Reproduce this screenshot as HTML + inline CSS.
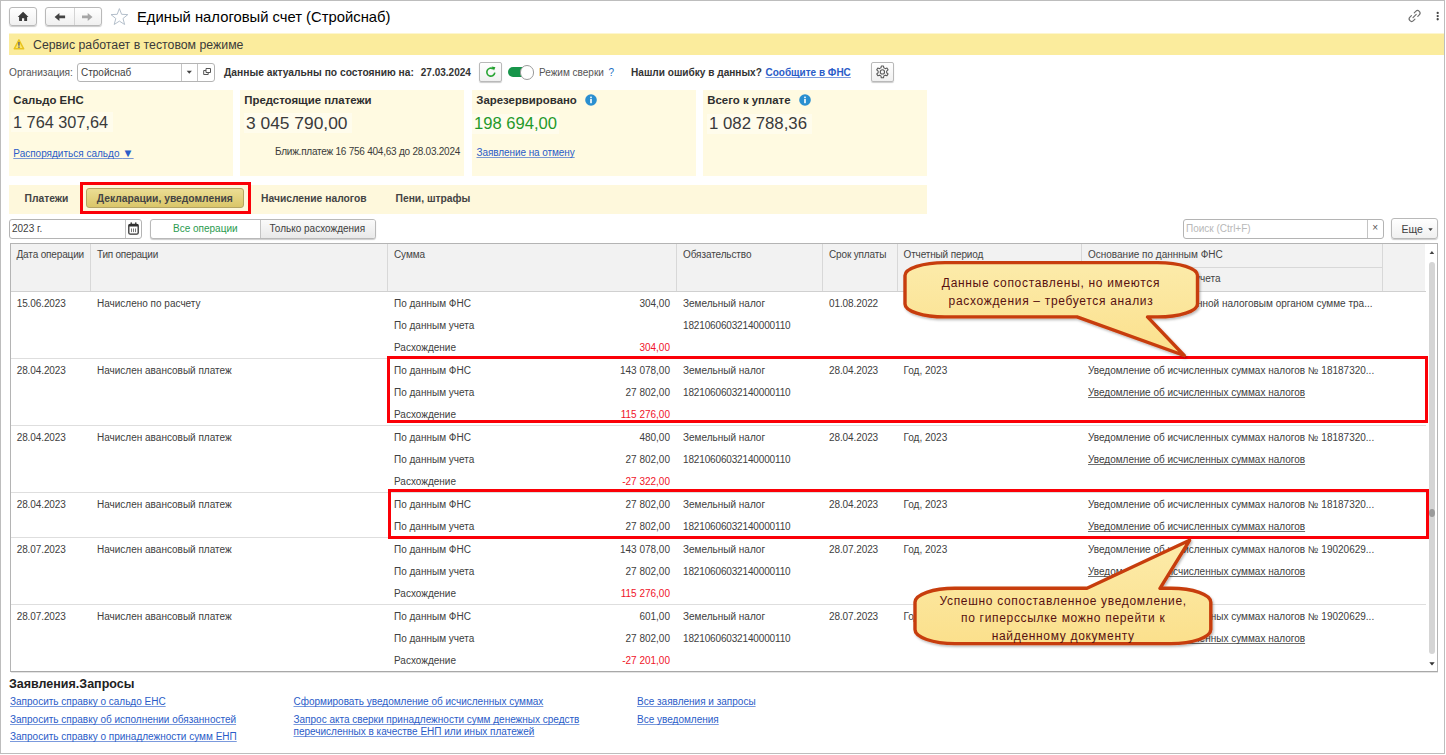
<!DOCTYPE html>
<html lang="ru"><head><meta charset="utf-8"><title>Единый налоговый счет</title>
<style>
*{box-sizing:border-box}
html,body{margin:0;padding:0}
body{width:1446px;height:755px;position:relative;overflow:hidden;background:#fff;font-family:"Liberation Sans",sans-serif;font-size:10px;color:#333;line-height:1}
.a{position:absolute;white-space:nowrap}
.b{font-weight:bold}
.t{position:absolute;white-space:nowrap;height:14px;line-height:14px;font-size:10px;color:#404040}
.r{text-align:right}
.red{color:#f0142a}
.lnk{color:#2a5cc8;text-decoration:underline;text-decoration-skip-ink:none;text-decoration-thickness:1px;text-decoration-color:rgba(42,92,200,.62)}
.u{text-decoration:underline;text-decoration-skip-ink:none;text-decoration-thickness:1px;text-decoration-color:rgba(50,50,50,.7)}
.btn{position:absolute;border:1px solid #b9b9b9;border-radius:3px;background:linear-gradient(#ffffff,#f0f0f0);box-shadow:0 1px 1px rgba(0,0,0,.2)}
.inp{position:absolute;border:1px solid #b4b4b4;border-radius:3px;background:#fff}
.card{position:absolute;top:90px;height:86px;width:223.5px;background:#fffae1}
.hl{position:absolute;height:1px;background:#dedede}
.vl{position:absolute;width:1px;background:#d8d8d8}
</style></head>
<body>
<div class="a" style="left:0;top:0;width:1445px;height:754px;border:1px solid #bdbdbd"></div>
<div class="btn" style="left:9px;top:7px;width:28px;height:19px"></div>
<div class="btn" style="left:45px;top:7px;width:57px;height:19px"></div>
<div class="vl" style="left:74px;top:8px;height:17px;background:#d4d4d4"></div>
<svg class="a" style="left:0;top:0" width="140" height="30" viewBox="0 0 140 30"><path d="M23.1 11.7 L28.5 17.1 H27.1 V21.1 H24.2 V18.3 H22 V21.1 H19.1 V17.1 H17.7 Z" fill="#3a3a3a"/><path d="M54.6 16.95 L59.4 13 V15.6 H65.1 V18.3 H59.4 V20.9 Z" fill="#444"/><path d="M92.5 16.95 L87.7 13 V15.6 H82 V18.3 H87.7 V20.9 Z" fill="#a6a6a6"/><path d="M119.4 8.6 L121.6 14.3 L127.8 14.6 L123 18.5 L124.6 24.5 L119.4 21.1 L114.2 24.5 L115.8 18.5 L111 14.6 L117.2 14.3 Z" stroke="#b4bfcb" stroke-width="1" fill="#fff" stroke-linejoin="miter"/></svg>
<div class="a" style="left:137px;top:7.5px;font-size:14.8px;line-height:18px;color:#000">Единый налоговый счет (Стройснаб)</div>
<svg class="a" style="left:1400px;top:4px" width="44" height="24" viewBox="1400 4 44 24"><g transform="translate(1414.6 16) rotate(-45)" fill="none" stroke="#6e6e6e" stroke-width="1.15" stroke-linecap="round"><path d="M2 -2.5 H4.1 A2.5 2.5 0 0 1 4.1 2.5 H2"/><path d="M-2 -2.5 H-4.1 A2.5 2.5 0 0 0 -4.1 2.5 H-2"/><path d="M-2.3 0 H2.3"/></g><circle cx="1437.7" cy="12.95" r="1.15" fill="#444"/><circle cx="1437.7" cy="16.1" r="1.15" fill="#444"/><circle cx="1437.7" cy="19.25" r="1.15" fill="#444"/></svg>
<div class="a" style="left:9px;top:33px;width:1435px;height:1px;background:#fdf6cf"></div><div class="a" style="left:9px;top:34px;width:1435px;height:21px;background:#fbec9d"></div>
<svg class="a" style="left:12px;top:37px" width="14" height="14" viewBox="12 37 14 14"><path d="M18.95 39.8 L23.7 48.8 H14.2 Z" fill="#fbe66a" stroke="#e8c21e" stroke-width="1.4" stroke-linejoin="round"/><rect x="18.3" y="42" width="1.3" height="3.7" fill="#4e5270"/><rect x="18.3" y="46.5" width="1.3" height="1.3" fill="#4e5270"/></svg>
<div class="a" style="left:33px;top:38px;font-size:12.3px;line-height:15px;color:#3a3a3a">Сервис работает в тестовом режиме</div>
<div class="t" style="left:9px;top:66px;color:#555;font-size:10.15px">Организация:</div>
<div class="inp" style="left:77px;top:63px;width:138px;height:19px"></div>
<div class="vl" style="left:181px;top:64px;height:17px;background:#c4c4c4"></div><div class="vl" style="left:197px;top:64px;height:17px;background:#c4c4c4"></div>
<div class="t" style="left:81px;top:66px">Стройснаб</div>
<svg class="a" style="left:186px;top:70px" width="7" height="5" viewBox="0 0 7 5"><path d="M0.7 0.7 H5.9 L3.3 3.7 Z" fill="#444"/></svg>
<svg class="a" style="left:202px;top:67px" width="10" height="10" viewBox="0 0 10 10"><g fill="none" stroke="#555" stroke-width="1"><path d="M4 1.5 H8.5 V5.5 H4 Z"/><path d="M4 3.5 H1.7 V7.5 H6.2 V5.5"/></g></svg>
<div class="t b" style="left:224px;top:66px;font-size:10.25px;color:#333">Данные актуальны по состоянию на:</div>
<div class="t b" style="left:420.8px;top:66px;font-size:10px;color:#333">27.03.2024</div>
<div class="btn" style="left:479px;top:62px;width:23px;height:20px;border-radius:2px"></div>
<svg class="a" style="left:485px;top:66px" width="12" height="12" viewBox="0 0 12 12"><path d="M9.8 6.6 A4 4 0 1 1 8.2 2.9" fill="none" stroke="#2aa636" stroke-width="1.6"/><path d="M6.6 0.6 L10.4 1.2 L9 4.6 Z" fill="#1f9e2c"/></svg>
<div class="a" style="left:508px;top:67px;width:22px;height:10px;border-radius:5px;background:#17954a"></div>
<div class="a" style="left:519.5px;top:65px;width:14.5px;height:14.5px;border-radius:7px;background:#fff;border:1px solid #9a9a9a"></div>
<div class="t" style="left:539px;top:66px;color:#555">Режим сверки</div>
<div class="t" style="left:608.5px;top:66px;color:#1a6fc4">?</div>
<div class="t b" style="left:631px;top:66px;font-size:10.1px;color:#333">Нашли ошибку в данных?</div>
<div class="t b lnk" style="left:765.5px;top:66px;font-size:10px">Сообщите в ФНС</div>
<div class="btn" style="left:871px;top:62px;width:23px;height:20px;border-radius:2px"></div>
<svg class="a" style="left:872px;top:62.3px" width="22" height="20" viewBox="872 62 22 20"><g fill="none" stroke="#5a5a5a" stroke-width="1.1" stroke-linejoin="round"><path d="M881.00 67.83L881.31 66.00L883.49 66.00L883.80 67.83A4.3 4.3 0 0 1 885.22 68.65L886.96 68.00L888.06 69.90L886.62 71.08A4.3 4.3 0 0 1 886.62 72.72L888.06 73.90L886.96 75.80L885.22 75.15A4.3 4.3 0 0 1 883.80 75.97L883.49 77.80L881.31 77.80L881.00 75.97A4.3 4.3 0 0 1 879.58 75.15L877.84 75.80L876.74 73.90L878.18 72.72A4.3 4.3 0 0 1 878.18 71.08L876.74 69.90L877.84 68.00L879.58 68.65A4.3 4.3 0 0 1 881.00 67.83Z"/><circle cx="882.4" cy="71.9" r="2.15"/></g></svg>
<div class="card" style="left:9px;width:224px"></div>
<div class="a b" style="left:13.3px;top:93.4px;font-size:11.4px;line-height:14px;color:#2e2e2e">Сальдо ЕНС</div>
<div class="a" style="left:11px;top:112px;width:102px;height:20px;background:#fffcec"></div>
<div class="a" style="left:13px;top:112px;font-size:16.3px;line-height:20px;color:#3a3a3a">1 764 307,64</div>
<div class="card" style="left:240px;width:224px"></div>
<div class="a b" style="left:244.3px;top:93.4px;font-size:11.4px;line-height:14px;color:#2e2e2e">Предстоящие платежи</div>
<div class="a" style="left:244px;top:113px;width:108px;height:20px;background:#fffcec"></div>
<div class="a" style="left:246px;top:113.3px;font-size:17.4px;line-height:20px;color:#3a3a3a">3 045 790,00</div>
<div class="card" style="left:472px;width:224px"></div>
<div class="a b" style="left:476.3px;top:93.4px;font-size:11.4px;line-height:14px;color:#2e2e2e">Зарезервировано</div>
<div class="a" style="left:472px;top:114px;width:87px;height:20px;background:#fffcec"></div>
<div class="a" style="left:474px;top:114px;font-size:16.6px;line-height:20px;color:#1f9a2a">198 694,00</div>
<div class="card" style="left:703px;width:224px"></div>
<div class="a b" style="left:707.3px;top:93.4px;font-size:11.4px;line-height:14px;color:#2e2e2e">Всего к уплате</div>
<div class="a" style="left:707px;top:114px;width:105px;height:20px;background:#fffcec"></div>
<div class="a" style="left:709px;top:113.7px;font-size:16.8px;line-height:20px;color:#3a3a3a">1 082 788,36</div>
<div class="t lnk" style="left:13.3px;top:146px">Распорядиться сальдо <span style="font-size:11.5px">▼</span></div>
<div class="a" style="left:275px;top:145.4px;font-size:10px;letter-spacing:-0.235px;line-height:14px;color:#3a3a3a">Ближ.платеж 16 756 404,63 до 28.03.2024</div>
<div class="t lnk" style="left:476.5px;top:146px;letter-spacing:-0.08px">Заявление на отмену</div>
<svg class="a" style="left:585px;top:94px" width="12" height="12" viewBox="0 0 12 12"><circle cx="6" cy="6" r="5.8" fill="#2a8fd0"/><rect x="5.2" y="5" width="1.6" height="4.2" fill="#fff"/><rect x="5.2" y="2.6" width="1.6" height="1.6" fill="#fff"/></svg>
<svg class="a" style="left:799px;top:94px" width="12" height="12" viewBox="0 0 12 12"><circle cx="6" cy="6" r="5.8" fill="#2a8fd0"/><rect x="5.2" y="5" width="1.6" height="4.2" fill="#fff"/><rect x="5.2" y="2.6" width="1.6" height="1.6" fill="#fff"/></svg>
<div class="a" style="left:9px;top:185px;width:918px;height:29px;background:#fef8dc"></div>
<div class="a" style="left:86px;top:188px;width:158px;height:20px;border:1px solid #b5a462;border-radius:3px;background:linear-gradient(#ebdd94,#dac669)"></div>
<svg class="a" style="left:70px;top:175px" width="200" height="50" viewBox="70 175 200 50"><rect x="81.5" y="183.5" width="168" height="29" fill="none" stroke="#fb0007" stroke-width="3"/></svg>
<div class="t b" style="left:24.5px;top:192.4px;font-size:10.3px;color:#444">Платежи</div>
<div class="t b" style="left:96.7px;top:192.4px;font-size:10.3px;color:#444">Декларации, уведомления</div>
<div class="t b" style="left:261px;top:192.4px;font-size:10.3px;color:#444">Начисление налогов</div>
<div class="t b" style="left:395.5px;top:192.4px;font-size:10.3px;color:#444">Пени, штрафы</div>
<div class="inp" style="left:9px;top:219px;width:133px;height:20px"></div>
<div class="vl" style="left:125px;top:220px;height:18px;background:#c4c4c4"></div>
<div class="t" style="left:12px;top:222px">2023 г.</div>
<svg class="a" style="left:128px;top:222px" width="11" height="13" viewBox="0 0 11 13"><rect x="0.8" y="2.3" width="9.4" height="9.9" rx="1.5" fill="#fff" stroke="#333" stroke-width="1.3"/><rect x="0.8" y="2.3" width="9.4" height="2.2" fill="#333"/><rect x="2.6" y="0.4" width="1.3" height="2.6" fill="#333"/><rect x="7.1" y="0.4" width="1.3" height="2.6" fill="#333"/><rect x="3" y="6.5" width="1" height="3.6" fill="#777"/><rect x="5" y="6.5" width="1" height="3.6" fill="#777"/><rect x="7" y="6.5" width="1" height="3.6" fill="#777"/></svg>
<div class="btn" style="left:150px;top:219px;width:225.5px;height:20px;background:#fff"></div>
<div class="a" style="left:260px;top:220px;width:114.5px;height:18px;border-left:1px solid #c4c4c4;border-radius:0 2px 2px 0;background:linear-gradient(#fafafa,#e9e9e9)"></div>
<div class="t" style="left:173px;top:222px;color:#2a9b4f">Все операции</div>
<div class="t" style="left:269.5px;top:222px">Только расхождения</div>
<div class="inp" style="left:1183px;top:219px;width:201px;height:20px"></div>
<div class="vl" style="left:1367px;top:220px;height:18px;background:#c4c4c4"></div>
<div class="t" style="left:1186px;top:222px;color:#b8b8b8">Поиск (Ctrl+F)</div>
<div class="t" style="left:1372.3px;top:220.5px;color:#555;font-size:10px">×</div>
<div class="btn" style="left:1391px;top:218px;width:47px;height:21px"></div>
<div class="t" style="left:1401.5px;top:222px;font-size:10.5px">Еще</div>
<svg class="a" style="left:1428px;top:228px" width="6" height="4" viewBox="0 0 6 4"><path d="M0.3 0.3 H4.7 L2.5 2.9 Z" fill="#444"/></svg>
<div class="a" style="left:10px;top:243px;width:1428px;height:429px;border:1px solid #b4b4b4;border-bottom-color:#a8a8a8;background:#fff"></div>
<div class="a" style="left:11px;top:244px;width:1414px;height:47px;background:#f2f2f2"></div>
<div class="hl" style="left:11px;top:291px;width:1415px;background:#d0d0d0"></div>
<div class="vl" style="left:90px;top:244px;height:47px"></div>
<div class="vl" style="left:387px;top:244px;height:47px"></div>
<div class="vl" style="left:676px;top:244px;height:47px"></div>
<div class="vl" style="left:822px;top:244px;height:47px"></div>
<div class="vl" style="left:897px;top:244px;height:47px"></div>
<div class="vl" style="left:1081px;top:244px;height:47px"></div>
<div class="vl" style="left:1382px;top:244px;height:47px"></div>
<div class="hl" style="left:1081px;top:267px;width:301px;background:#d8d8d8"></div>
<div class="t" style="left:16.5px;top:248px;color:#444;letter-spacing:-0.15px">Дата операции</div>
<div class="t" style="left:97px;top:248px;color:#444;letter-spacing:-0.25px">Тип операции</div>
<div class="t" style="left:394px;top:248px;color:#444;letter-spacing:-0.1px">Сумма</div>
<div class="t" style="left:683px;top:248px;color:#444;letter-spacing:-0.1px">Обязательство</div>
<div class="t" style="left:829px;top:248px;color:#444;letter-spacing:-0.15px">Срок уплаты</div>
<div class="t" style="left:903.5px;top:248px;color:#444;letter-spacing:-0.14px">Отчетный период</div>
<div class="t" style="left:1088px;top:248px;color:#444;letter-spacing:0px">Основание по даннным ФНС</div>
<div class="t" style="left:1088px;top:272px;color:#444">Основание по данным учета</div>
<div class="t" style="left:16.7px;top:297px;letter-spacing:-0.1px">15.06.2023</div>
<div class="t" style="left:97px;top:297px">Начислено по расчету</div>
<div class="t" style="left:394px;top:297px">По данным ФНС</div>
<div class="t r" style="left:570px;width:100px;top:297px">304,00</div>
<div class="t" style="left:394px;top:319px">По данным учета</div>
<div class="t" style="left:394px;top:341px">Расхождение</div>
<div class="t r red" style="left:570px;width:100px;top:341px">304,00</div>
<div class="t" style="left:683px;top:297px">Земельный налог</div>
<div class="t" style="left:683px;top:319px;letter-spacing:-0.15px">18210606032140000110</div>
<div class="t" style="left:829px;top:297px;letter-spacing:-0.1px">01.08.2022</div>
<div class="t" style="left:1088px;top:297px">Сообщение об исчисленной налоговым органом сумме тра...</div>
<div class="hl" style="left:11px;top:358px;width:1415px"></div>
<div class="t" style="left:16.7px;top:364px;letter-spacing:-0.1px">28.04.2023</div>
<div class="t" style="left:97px;top:364px">Начислен авансовый платеж</div>
<div class="t" style="left:394px;top:364px">По данным ФНС</div>
<div class="t r" style="left:570px;width:100px;top:364px">143 078,00</div>
<div class="t" style="left:394px;top:386px">По данным учета</div>
<div class="t r" style="left:570px;width:100px;top:386px">27 802,00</div>
<div class="t" style="left:394px;top:408px">Расхождение</div>
<div class="t r red" style="left:570px;width:100px;top:408px">115 276,00</div>
<div class="t" style="left:683px;top:364px">Земельный налог</div>
<div class="t" style="left:683px;top:386px;letter-spacing:-0.15px">18210606032140000110</div>
<div class="t" style="left:829px;top:364px;letter-spacing:-0.1px">28.04.2023</div>
<div class="t" style="left:903.5px;top:364px">Год, 2023</div>
<div class="t" style="left:1088px;top:364px">Уведомление об исчисленных суммах налогов № 18187320...</div>
<div class="t u" style="left:1088px;top:386px">Уведомление об исчисленных суммах налогов</div>
<div class="hl" style="left:11px;top:425px;width:1415px"></div>
<div class="t" style="left:16.7px;top:431px;letter-spacing:-0.1px">28.04.2023</div>
<div class="t" style="left:97px;top:431px">Начислен авансовый платеж</div>
<div class="t" style="left:394px;top:431px">По данным ФНС</div>
<div class="t r" style="left:570px;width:100px;top:431px">480,00</div>
<div class="t" style="left:394px;top:453px">По данным учета</div>
<div class="t r" style="left:570px;width:100px;top:453px">27 802,00</div>
<div class="t" style="left:394px;top:475px">Расхождение</div>
<div class="t r red" style="left:570px;width:100px;top:475px">-27 322,00</div>
<div class="t" style="left:683px;top:431px">Земельный налог</div>
<div class="t" style="left:683px;top:453px;letter-spacing:-0.15px">18210606032140000110</div>
<div class="t" style="left:829px;top:431px;letter-spacing:-0.1px">28.04.2023</div>
<div class="t" style="left:903.5px;top:431px">Год, 2023</div>
<div class="t" style="left:1088px;top:431px">Уведомление об исчисленных суммах налогов № 18187320...</div>
<div class="t u" style="left:1088px;top:453px">Уведомление об исчисленных суммах налогов</div>
<div class="hl" style="left:11px;top:492px;width:1415px"></div>
<div class="t" style="left:16.7px;top:498px;letter-spacing:-0.1px">28.04.2023</div>
<div class="t" style="left:97px;top:498px">Начислен авансовый платеж</div>
<div class="t" style="left:394px;top:498px">По данным ФНС</div>
<div class="t r" style="left:570px;width:100px;top:498px">27 802,00</div>
<div class="t" style="left:394px;top:520px">По данным учета</div>
<div class="t r" style="left:570px;width:100px;top:520px">27 802,00</div>
<div class="t" style="left:683px;top:498px">Земельный налог</div>
<div class="t" style="left:683px;top:520px;letter-spacing:-0.15px">18210606032140000110</div>
<div class="t" style="left:829px;top:498px;letter-spacing:-0.1px">28.04.2023</div>
<div class="t" style="left:903.5px;top:498px">Год, 2023</div>
<div class="t" style="left:1088px;top:498px">Уведомление об исчисленных суммах налогов № 18187320...</div>
<div class="t u" style="left:1088px;top:520px">Уведомление об исчисленных суммах налогов</div>
<div class="hl" style="left:11px;top:537px;width:1415px"></div>
<div class="t" style="left:16.7px;top:543px;letter-spacing:-0.1px">28.07.2023</div>
<div class="t" style="left:97px;top:543px">Начислен авансовый платеж</div>
<div class="t" style="left:394px;top:543px">По данным ФНС</div>
<div class="t r" style="left:570px;width:100px;top:543px">143 078,00</div>
<div class="t" style="left:394px;top:565px">По данным учета</div>
<div class="t r" style="left:570px;width:100px;top:565px">27 802,00</div>
<div class="t" style="left:394px;top:587px">Расхождение</div>
<div class="t r red" style="left:570px;width:100px;top:587px">115 276,00</div>
<div class="t" style="left:683px;top:543px">Земельный налог</div>
<div class="t" style="left:683px;top:565px;letter-spacing:-0.15px">18210606032140000110</div>
<div class="t" style="left:829px;top:543px;letter-spacing:-0.1px">28.07.2023</div>
<div class="t" style="left:903.5px;top:543px">Год, 2023</div>
<div class="t" style="left:1088px;top:543px">Уведомление об исчисленных суммах налогов № 19020629...</div>
<div class="t u" style="left:1088px;top:565px">Уведомление об исчисленных суммах налогов</div>
<div class="hl" style="left:11px;top:604px;width:1415px"></div>
<div class="t" style="left:16.7px;top:610px;letter-spacing:-0.1px">28.07.2023</div>
<div class="t" style="left:97px;top:610px">Начислен авансовый платеж</div>
<div class="t" style="left:394px;top:610px">По данным ФНС</div>
<div class="t r" style="left:570px;width:100px;top:610px">601,00</div>
<div class="t" style="left:394px;top:632px">По данным учета</div>
<div class="t r" style="left:570px;width:100px;top:632px">27 802,00</div>
<div class="t" style="left:394px;top:654px">Расхождение</div>
<div class="t r red" style="left:570px;width:100px;top:654px">-27 201,00</div>
<div class="t" style="left:683px;top:610px">Земельный налог</div>
<div class="t" style="left:683px;top:632px;letter-spacing:-0.15px">18210606032140000110</div>
<div class="t" style="left:829px;top:610px;letter-spacing:-0.1px">28.07.2023</div>
<div class="t" style="left:903.5px;top:610px">Год, 2023</div>
<div class="t" style="left:1088px;top:610px">Уведомление об исчисленных суммах налогов № 19020629...</div>
<div class="t u" style="left:1088px;top:632px">Уведомление об исчисленных суммах налогов</div>
<div class="hl" style="left:11px;top:672px;width:1427px;background:#e4e4e4"></div>
<div class="a" style="left:1426px;top:244px;width:11px;height:427px;background:#fff"></div>
<svg class="a" style="left:1429px;top:250px" width="6" height="5" viewBox="0 0 6 5"><path d="M0.6 4 H5.2 L2.9 0.9 Z" fill="#444"/></svg>
<svg class="a" style="left:1429px;top:662px" width="6" height="4" viewBox="0 0 6 4"><path d="M0.3 0.3 H5.7 L3 3.6 Z" fill="#333"/></svg>
<div class="a" style="left:1429px;top:261.5px;width:6px;height:392px;border-radius:3px;background:#d5d5d5"></div>
<div class="a" style="left:1429px;top:509px;width:6px;height:8px;border-radius:3px/4px;background:#9a9a9a"></div>
<svg class="a" style="left:380px;top:350px" width="1060" height="200" viewBox="380 350 1060 200"><rect x="388.5" y="357.5" width="1038" height="64" fill="none" stroke="#fb0007" stroke-width="3"/><rect x="389.5" y="490.5" width="1038" height="47" fill="none" stroke="#fb0007" stroke-width="3"/></svg>
<svg class="a" style="left:890px;top:250px" width="330" height="120" viewBox="890 250 330 120">
<defs><linearGradient id="cg" x1="0" y1="0" x2="0" y2="1"><stop offset="0" stop-color="#fcebaa"/><stop offset="1" stop-color="#fbe08c"/></linearGradient>
<filter id="sh" x="-5%" y="-10%" width="112%" height="125%"><feDropShadow dx="1.2" dy="1.6" stdDeviation="1.1" flood-color="#000" flood-opacity="0.28"/></filter></defs>
<path d="M945 262.6 H1157.5 A40 13 0 0 1 1197.5 275.6 V303.9 A40 13 0 0 1 1157.5 316.9 H1147.5 L1184.2 355.5 L1077 316.9 H945 A40 13 0 0 1 905 303.9 V275.6 A40 13 0 0 1 945 262.6 Z" fill="url(#cg)" stroke="#c73d0c" stroke-width="3.4" stroke-linejoin="round" filter="url(#sh)"/>
<text x="1051" y="286.6" font-family="Liberation Sans, sans-serif" font-size="12" letter-spacing="0.68" fill="#581010" text-anchor="middle">Данные сопоставлены, но имеются</text>
<text x="1051" y="305" font-family="Liberation Sans, sans-serif" font-size="12" letter-spacing="0.68" fill="#581010" text-anchor="middle">расхождения – требуется анализ</text>
</svg>
<svg class="a" style="left:900px;top:530px" width="330" height="125" viewBox="900 530 330 125">
<path d="M955 588.3 H1087 L1189.6 540.3 L1160 588.3 H1170.8 A40 14 0 0 1 1210.8 602.3 V629.6 A40 14 0 0 1 1170.8 643.6 H955 A40 14 0 0 1 915 629.6 V602.3 A40 14 0 0 1 955 588.3 Z" fill="url(#cg)" stroke="#c73d0c" stroke-width="3.4" stroke-linejoin="round" filter="url(#sh)"/>
<text x="1063.2" y="605" font-family="Liberation Sans, sans-serif" font-size="12" letter-spacing="0.68" fill="#581010" text-anchor="middle">Успешно сопоставленное уведомление,</text>
<text x="1063.2" y="621.6" font-family="Liberation Sans, sans-serif" font-size="12" letter-spacing="0.68" fill="#581010" text-anchor="middle">по гиперссылке можно перейти к</text>
<text x="1063.2" y="640" font-family="Liberation Sans, sans-serif" font-size="12" letter-spacing="0.68" fill="#581010" text-anchor="middle">найденному документу</text>
</svg>
<div class="a b" style="left:9px;top:677px;font-size:12.5px;line-height:15px;color:#222">Заявления.Запросы</div>
<div class="t lnk" style="left:10px;top:695px">Запросить справку о сальдо ЕНС</div>
<div class="t lnk" style="left:10px;top:713px">Запросить справку об исполнении обязанностей</div>
<div class="t lnk" style="left:10px;top:730px">Запросить справку о принадлежности сумм ЕНП</div>
<div class="t lnk" style="left:293.5px;top:695px">Сформировать уведомление об исчисленных суммах</div>
<div class="t lnk" style="left:293.5px;top:713px">Запрос акта сверки принадлежности сумм денежных средств</div>
<div class="t lnk" style="left:293.5px;top:724.5px">перечисленных в качестве ЕНП или иных платежей</div>
<div class="t lnk" style="left:637px;top:695px">Все заявления и запросы</div>
<div class="t lnk" style="left:637px;top:713px">Все уведомления</div>
</body></html>
